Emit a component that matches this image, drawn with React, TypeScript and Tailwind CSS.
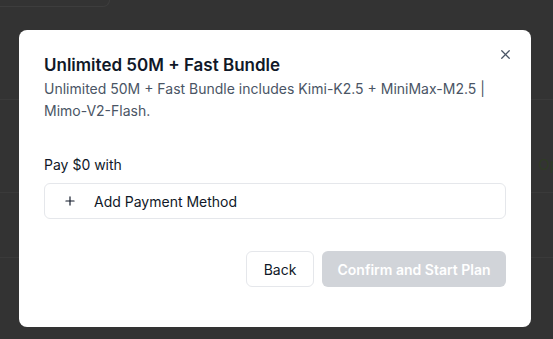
import React from 'react';
import { X, Plus } from 'lucide-react';

const BackgroundPage: React.FC = () => (
  <div className="flex flex-col h-full">
    <div className="h-[7px] w-[110px] rounded-br-lg border-b border-r border-[#3d3d3d]"></div>
    <div className="h-[93px] border-b border-[#3a3a3a]"></div>
    <div className="h-[93px] border-b border-[#3a3a3a] flex items-end justify-end pb-[17px]">
      <span className="text-[15px] leading-[20px] text-[#2f3b26] mr-[-6px]">Op</span>
    </div>
    <div className="h-[65px] border-b border-[#3a3a3a]"></div>
  </div>
);

const App: React.FC = () => {
  return (
    <div
      className="relative w-[553px] h-[339px] overflow-hidden bg-[#333333]"
      style={{ fontFamily: 'Inter, "Noto Sans", sans-serif' }}
    >
      <BackgroundPage />

      <div className="absolute left-[19px] top-[30px] w-[512px] h-[297px] bg-white rounded-lg px-[25px] pt-[21px]">
        <button className="absolute top-[17px] right-[18px] text-gray-600">
          <X size={15} strokeWidth={2} />
        </button>

        <h2 className="text-[17px] leading-[28px] font-semibold text-gray-900">
          Unlimited 50M + Fast Bundle
        </h2>
        <p className="text-[14px] leading-[22px] text-gray-600 mt-[-1px]">
          Unlimited 50M + Fast Bundle includes Kimi-K2.5 + MiniMax-M2.5 | Mimo-V2-Flash.
        </p>

        <p className="mt-[33px] text-[14px] leading-[20px] text-gray-900">Pay $0 with</p>

        <button className="mt-[8px] w-full h-[36px] flex items-center gap-[17px] px-[18px] border border-gray-200 rounded-md text-[14px] text-gray-900">
          <Plus size={14} strokeWidth={2} />
          <span>Add Payment Method</span>
        </button>

        <div className="mt-[32px] flex justify-end gap-[8px]">
          <button className="h-[36px] w-[68px] border border-gray-200 rounded-md text-[14px] text-gray-900">
            Back
          </button>
          <button className="h-[36px] w-[184px] rounded-md bg-[#d1d4d9] text-[14px] font-semibold text-white">
            Confirm and Start Plan
          </button>
        </div>
      </div>
    </div>
  );
};

export default App;
